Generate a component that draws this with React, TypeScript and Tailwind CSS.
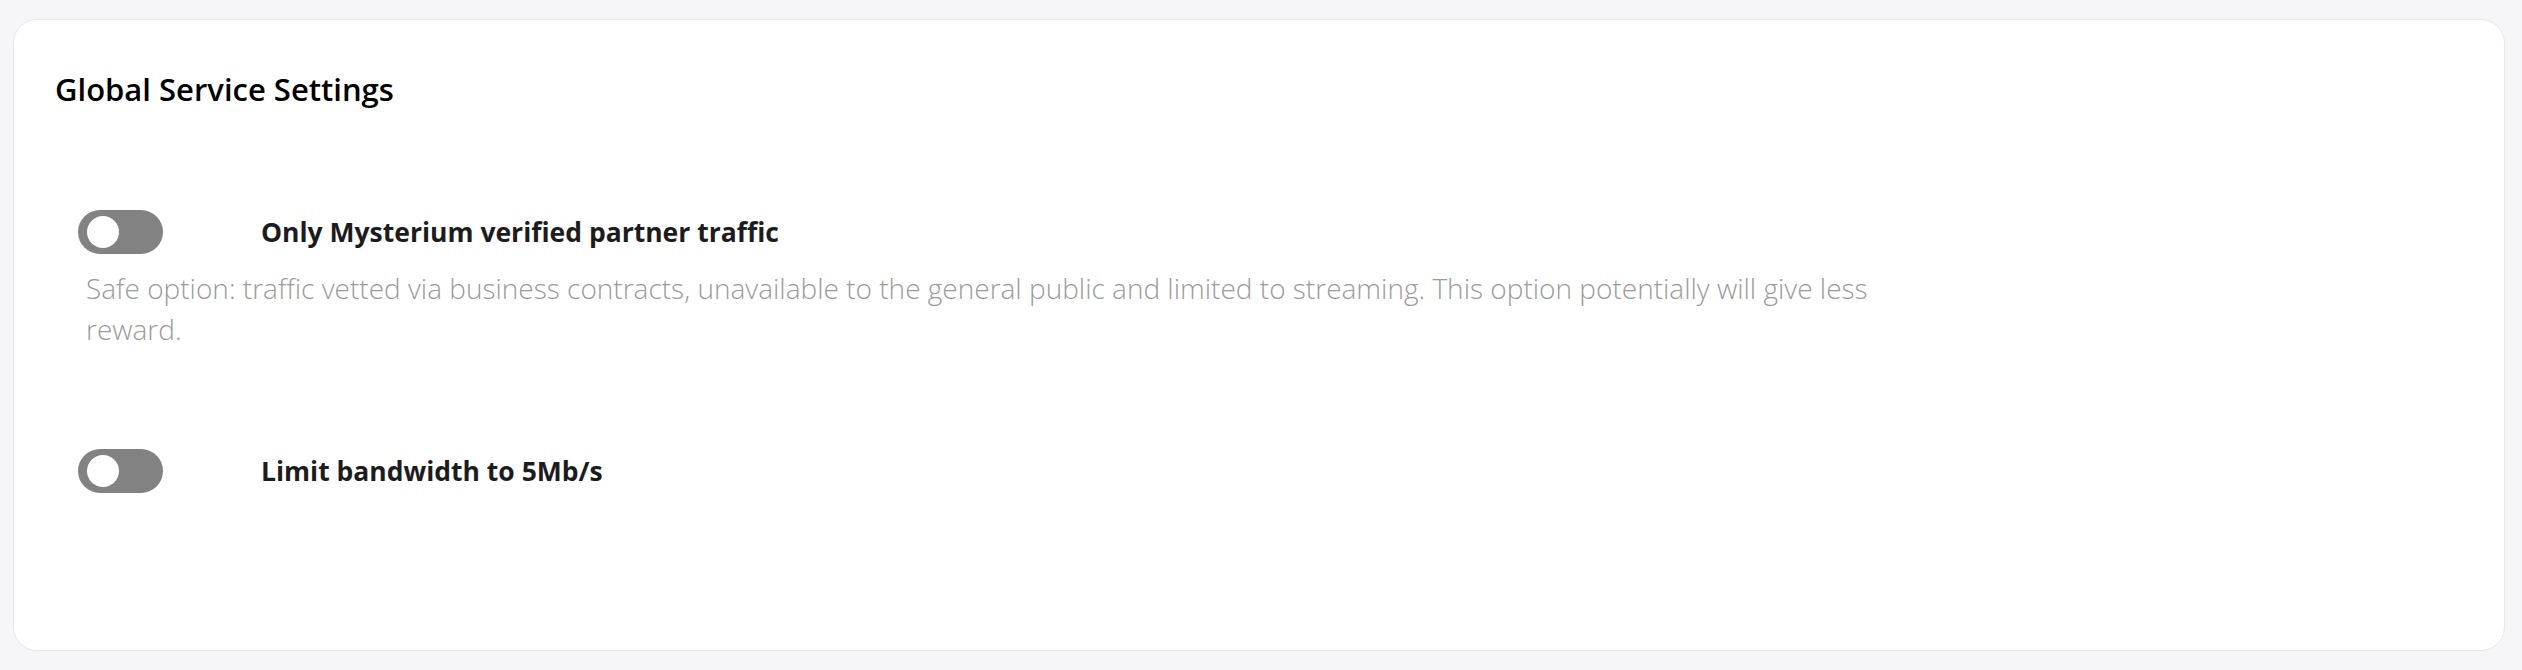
import React, { useState } from 'react';

const Toggle: React.FC<{ on: boolean; onChange: (v: boolean) => void }> = ({ on, onChange }) => (
  <button
    type="button"
    onClick={() => onChange(!on)}
    className={`relative shrink-0 w-[85px] h-[44px] rounded-full ${on ? 'bg-[#5a2d7a]' : 'bg-[#828282]'}`}
  >
    <span
      className={`absolute top-[6px] w-[32px] h-[32px] rounded-full bg-white ${on ? 'left-[44px]' : 'left-[9px]'}`}
    />
  </button>
);

export default function App() {
  const [partnerOnly, setPartnerOnly] = useState(false);
  const [limitBandwidth, setLimitBandwidth] = useState(false);

  return (
    <div className="w-full h-screen bg-[#f6f6f8] pt-[19px] pb-[19px] pl-[13px] pr-[17px] font-['Open_Sans',sans-serif]">
      <div className="h-full bg-white border border-[#e8e8ec] rounded-[24px] pl-[41px] pt-[51px]">
        <h2 className="text-[31px] leading-[36px] font-semibold text-black">Global Service Settings</h2>

        <div className="pl-[23px] mt-[103px]">
          {/* partner traffic */}
          <div className="flex items-center">
            <Toggle on={partnerOnly} onChange={setPartnerOnly} />
            <span className="ml-[98px] text-[26.5px] leading-[36px] font-bold text-[#1c1c20]">
              Only Mysterium verified partner traffic
            </span>
          </div>
          <p className="mt-[14px] ml-[8px] w-[1830px] text-[28px] leading-[41px] font-light text-[#9b9b9b]">
            Safe option: traffic vetted via business contracts, unavailable to the general public and limited to streaming. This option potentially will give less reward.
          </p>

          {/* bandwidth */}
          <div className="flex items-center mt-[99px]">
            <Toggle on={limitBandwidth} onChange={setLimitBandwidth} />
            <span className="ml-[98px] text-[26.5px] leading-[36px] font-bold text-[#1c1c20]">
              Limit bandwidth to 5Mb/s
            </span>
          </div>
        </div>
      </div>
    </div>
  );
}
